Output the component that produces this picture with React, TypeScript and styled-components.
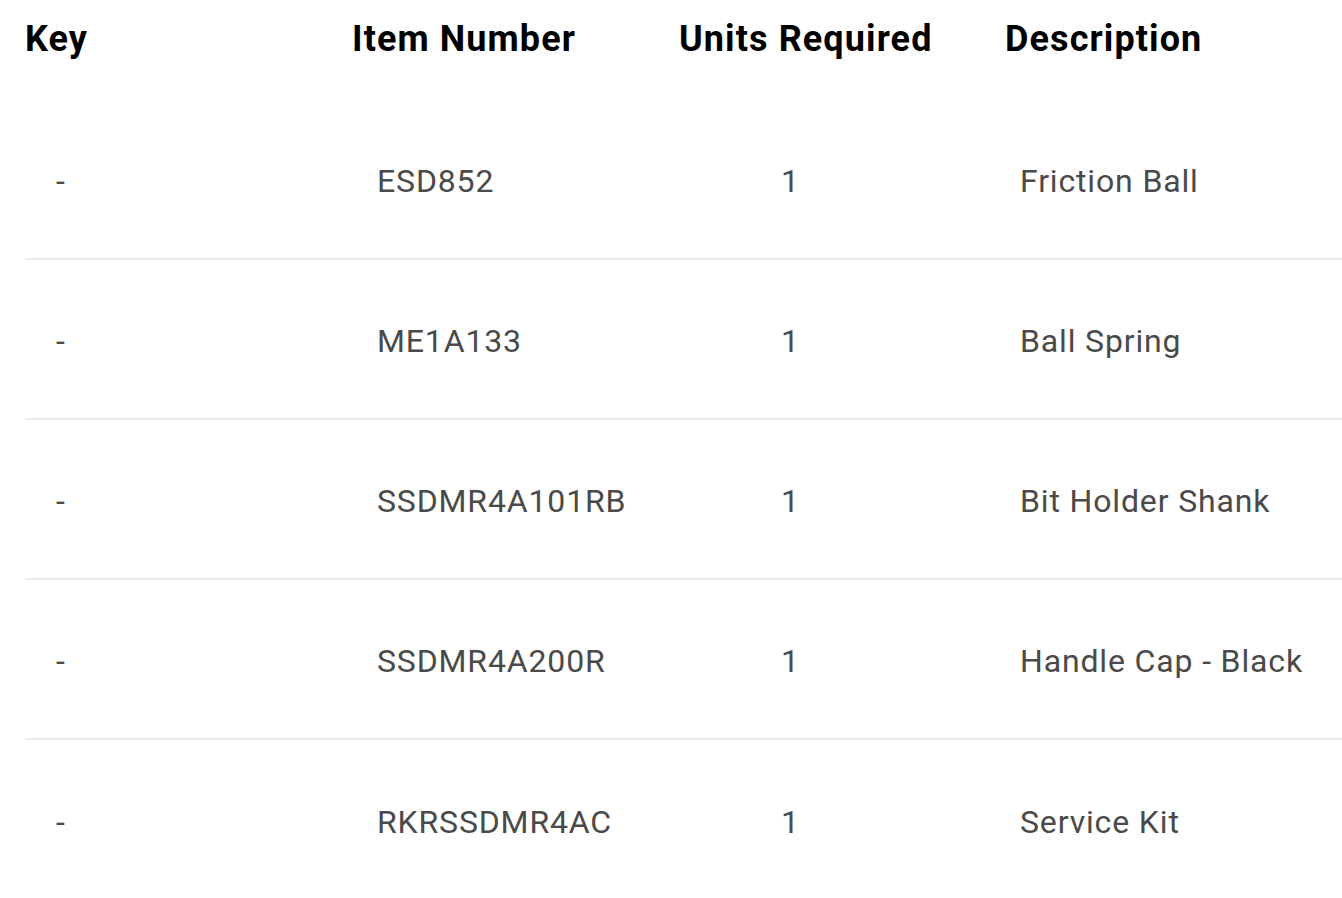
import React from "react";
import styled, { createGlobalStyle } from "styled-components";

const Global = createGlobalStyle`
  html, body { margin: 0; padding: 0; background: #ffffff; }
  body { font-family: Roboto, "Noto Sans", sans-serif; overflow: hidden; }
`;

const Table = styled.div`
  width: 1342px;
  padding-left: 25px;
  box-sizing: border-box;
`;

const cols = "327px 327px 326px 1fr";

const HeaderRow = styled.div`
  display: grid;
  grid-template-columns: ${cols};
  height: 100px;
  align-items: start;
  padding-top: 18px;
  box-sizing: border-box;
`;

const HeaderCell = styled.div`
  font-size: 36px;
  font-weight: 700;
  color: #000;
  white-space: nowrap;
  letter-spacing: 1.1px;
`;

const Row = styled.div<{ $last?: boolean }>`
  display: grid;
  grid-template-columns: ${cols};
  height: 160px;
  align-items: center;
  padding-top: 4px;
  border-bottom: ${(p) => (p.$last ? "none" : "2px solid #ebebeb")};
  box-sizing: border-box;
`;

const Cell = styled.div<{ $pad: number }>`
  font-size: 32px;
  font-weight: 400;
  color: #4a4a4a;
  padding-left: ${(p) => p.$pad}px;
  white-space: nowrap;
  letter-spacing: 0.85px;
`;

const rows = [
  ["ESD852", "1", "Friction Ball"],
  ["ME1A133", "1", "Ball Spring"],
  ["SSDMR4A101RB", "1", "Bit Holder Shank"],
  ["SSDMR4A200R", "1", "Handle Cap - Black"],
  ["RKRSSDMR4AC", "1", "Service Kit"],
];

export default function App() {
  return (
    <>
      <Global />
      <Table>
        <HeaderRow>
          <HeaderCell>Key</HeaderCell>
          <HeaderCell>Item Number</HeaderCell>
          <HeaderCell>Units Required</HeaderCell>
          <HeaderCell>Description</HeaderCell>
        </HeaderRow>
        {rows.map((r, i) => (
          <Row key={r[0]} $last={i === rows.length - 1}>
            <Cell $pad={31}>-</Cell>
            <Cell $pad={25}>{r[0]}</Cell>
            <Cell $pad={102}>{r[1]}</Cell>
            <Cell $pad={15}>{r[2]}</Cell>
          </Row>
        ))}
      </Table>
    </>
  );
}
